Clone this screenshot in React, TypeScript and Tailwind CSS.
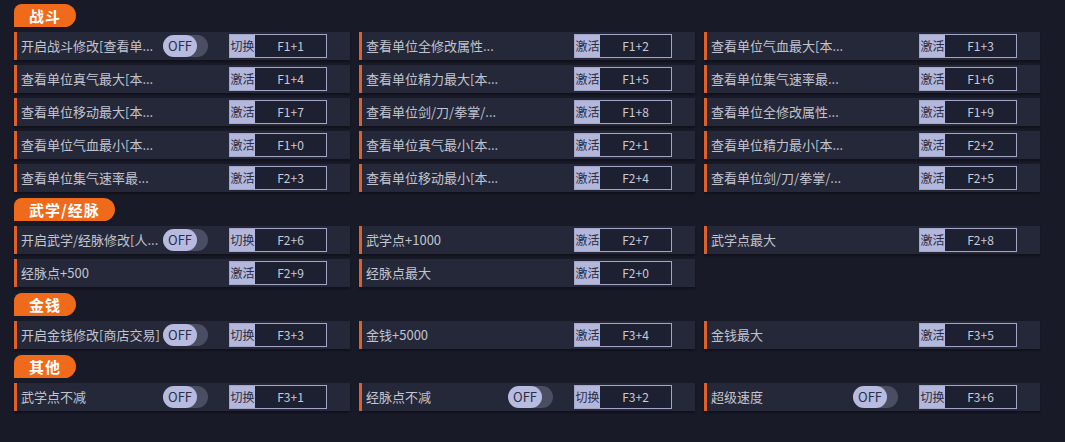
import React from "react";

interface Item {
  label: string;
  toggle?: boolean;
  key: string;
}

interface Section {
  title: string;
  items: Item[];
}

const SECTIONS: Section[] = [
  {
    title: "战斗",
    items: [
      { label: "开启战斗修改[查看单...", toggle: true, key: "F1+1" },
      { label: "查看单位全修改属性...", key: "F1+2" },
      { label: "查看单位气血最大[本...", key: "F1+3" },
      { label: "查看单位真气最大[本...", key: "F1+4" },
      { label: "查看单位精力最大[本...", key: "F1+5" },
      { label: "查看单位集气速率最...", key: "F1+6" },
      { label: "查看单位移动最大[本...", key: "F1+7" },
      { label: "查看单位剑/刀/拳掌/...", key: "F1+8" },
      { label: "查看单位全修改属性...", key: "F1+9" },
      { label: "查看单位气血最小[本...", key: "F1+0" },
      { label: "查看单位真气最小[本...", key: "F2+1" },
      { label: "查看单位精力最小[本...", key: "F2+2" },
      { label: "查看单位集气速率最...", key: "F2+3" },
      { label: "查看单位移动最小[本...", key: "F2+4" },
      { label: "查看单位剑/刀/拳掌/...", key: "F2+5" },
    ],
  },
  {
    title: "武学/经脉",
    items: [
      { label: "开启武学/经脉修改[人...", toggle: true, key: "F2+6" },
      { label: "武学点+1000", key: "F2+7" },
      { label: "武学点最大", key: "F2+8" },
      { label: "经脉点+500", key: "F2+9" },
      { label: "经脉点最大", key: "F2+0" },
    ],
  },
  {
    title: "金钱",
    items: [
      { label: "开启金钱修改[商店交易]", toggle: true, key: "F3+3" },
      { label: "金钱+5000", key: "F3+4" },
      { label: "金钱最大", key: "F3+5" },
    ],
  },
  {
    title: "其他",
    items: [
      { label: "武学点不减", toggle: true, key: "F3+1" },
      { label: "经脉点不减", toggle: true, key: "F3+2" },
      { label: "超级速度", toggle: true, key: "F3+6" },
    ],
  },
];

function Toggle() {
  return (
    <div className="w-[45px] h-[22px] rounded-full bg-[#4b4e63] mr-[21px] shrink-0 flex">
      <div className="w-[34px] h-[22px] rounded-full bg-[#b8bbe0] flex items-center justify-center text-[13px] text-[#2b2e47]">
        OFF
      </div>
    </div>
  );
}

function KeyBox({ toggle, hotkey }: { toggle?: boolean; hotkey: string }) {
  return (
    <div className="w-[98px] h-[24px] border border-[#a3a6c6] flex shrink-0">
      <div className="w-[25px] bg-[#b4b7dc] text-[#2a2d42] text-[12px] flex items-center justify-center">
        {toggle ? "切换" : "激活"}
      </div>
      <div className="flex-1 bg-[#1d2031] text-[#c9cad8] text-[12px] flex items-center justify-center">
        {hotkey}
      </div>
    </div>
  );
}

function Row({ item }: { item: Item }) {
  return (
    <div className="h-[28px] bg-[#252838] border-l-[3px] border-[#e0602a] pl-[4px] pr-[23px] flex items-center shadow-[0_2px_2px_rgba(0,0,0,0.35)]">
      <div className="flex-1 min-w-0 whitespace-nowrap overflow-hidden text-[13px] text-[#c2c4d0]">
        {item.label}
      </div>
      {item.toggle && <Toggle />}
      <KeyBox toggle={item.toggle} hotkey={item.key} />
    </div>
  );
}

export default function App() {
  return (
    <main
      className="w-[1065px] h-[442px] bg-[#181a28] pt-[4px] pl-[14px] overflow-hidden"
      style={{ fontFamily: '"Noto Sans CJK SC", "Noto Sans", sans-serif' }}
    >
      <div className="flex flex-col gap-[6px] w-[1026px]">
        {SECTIONS.map((section) => (
          <section key={section.title} className="flex flex-col">
            <div className="flex w-fit h-[23px] items-center px-[15px] bg-[#f06a1c] text-white text-[15px] leading-none font-bold tracking-[1px] rounded-tl-[8px] rounded-r-[12px]">
              {section.title}
            </div>
            <div className="grid grid-cols-3 gap-x-[9px] gap-y-[5px] mt-[5px]">
              {section.items.map((item, i) => (
                <Row key={i} item={item} />
              ))}
            </div>
          </section>
        ))}
      </div>
    </main>
  );
}
